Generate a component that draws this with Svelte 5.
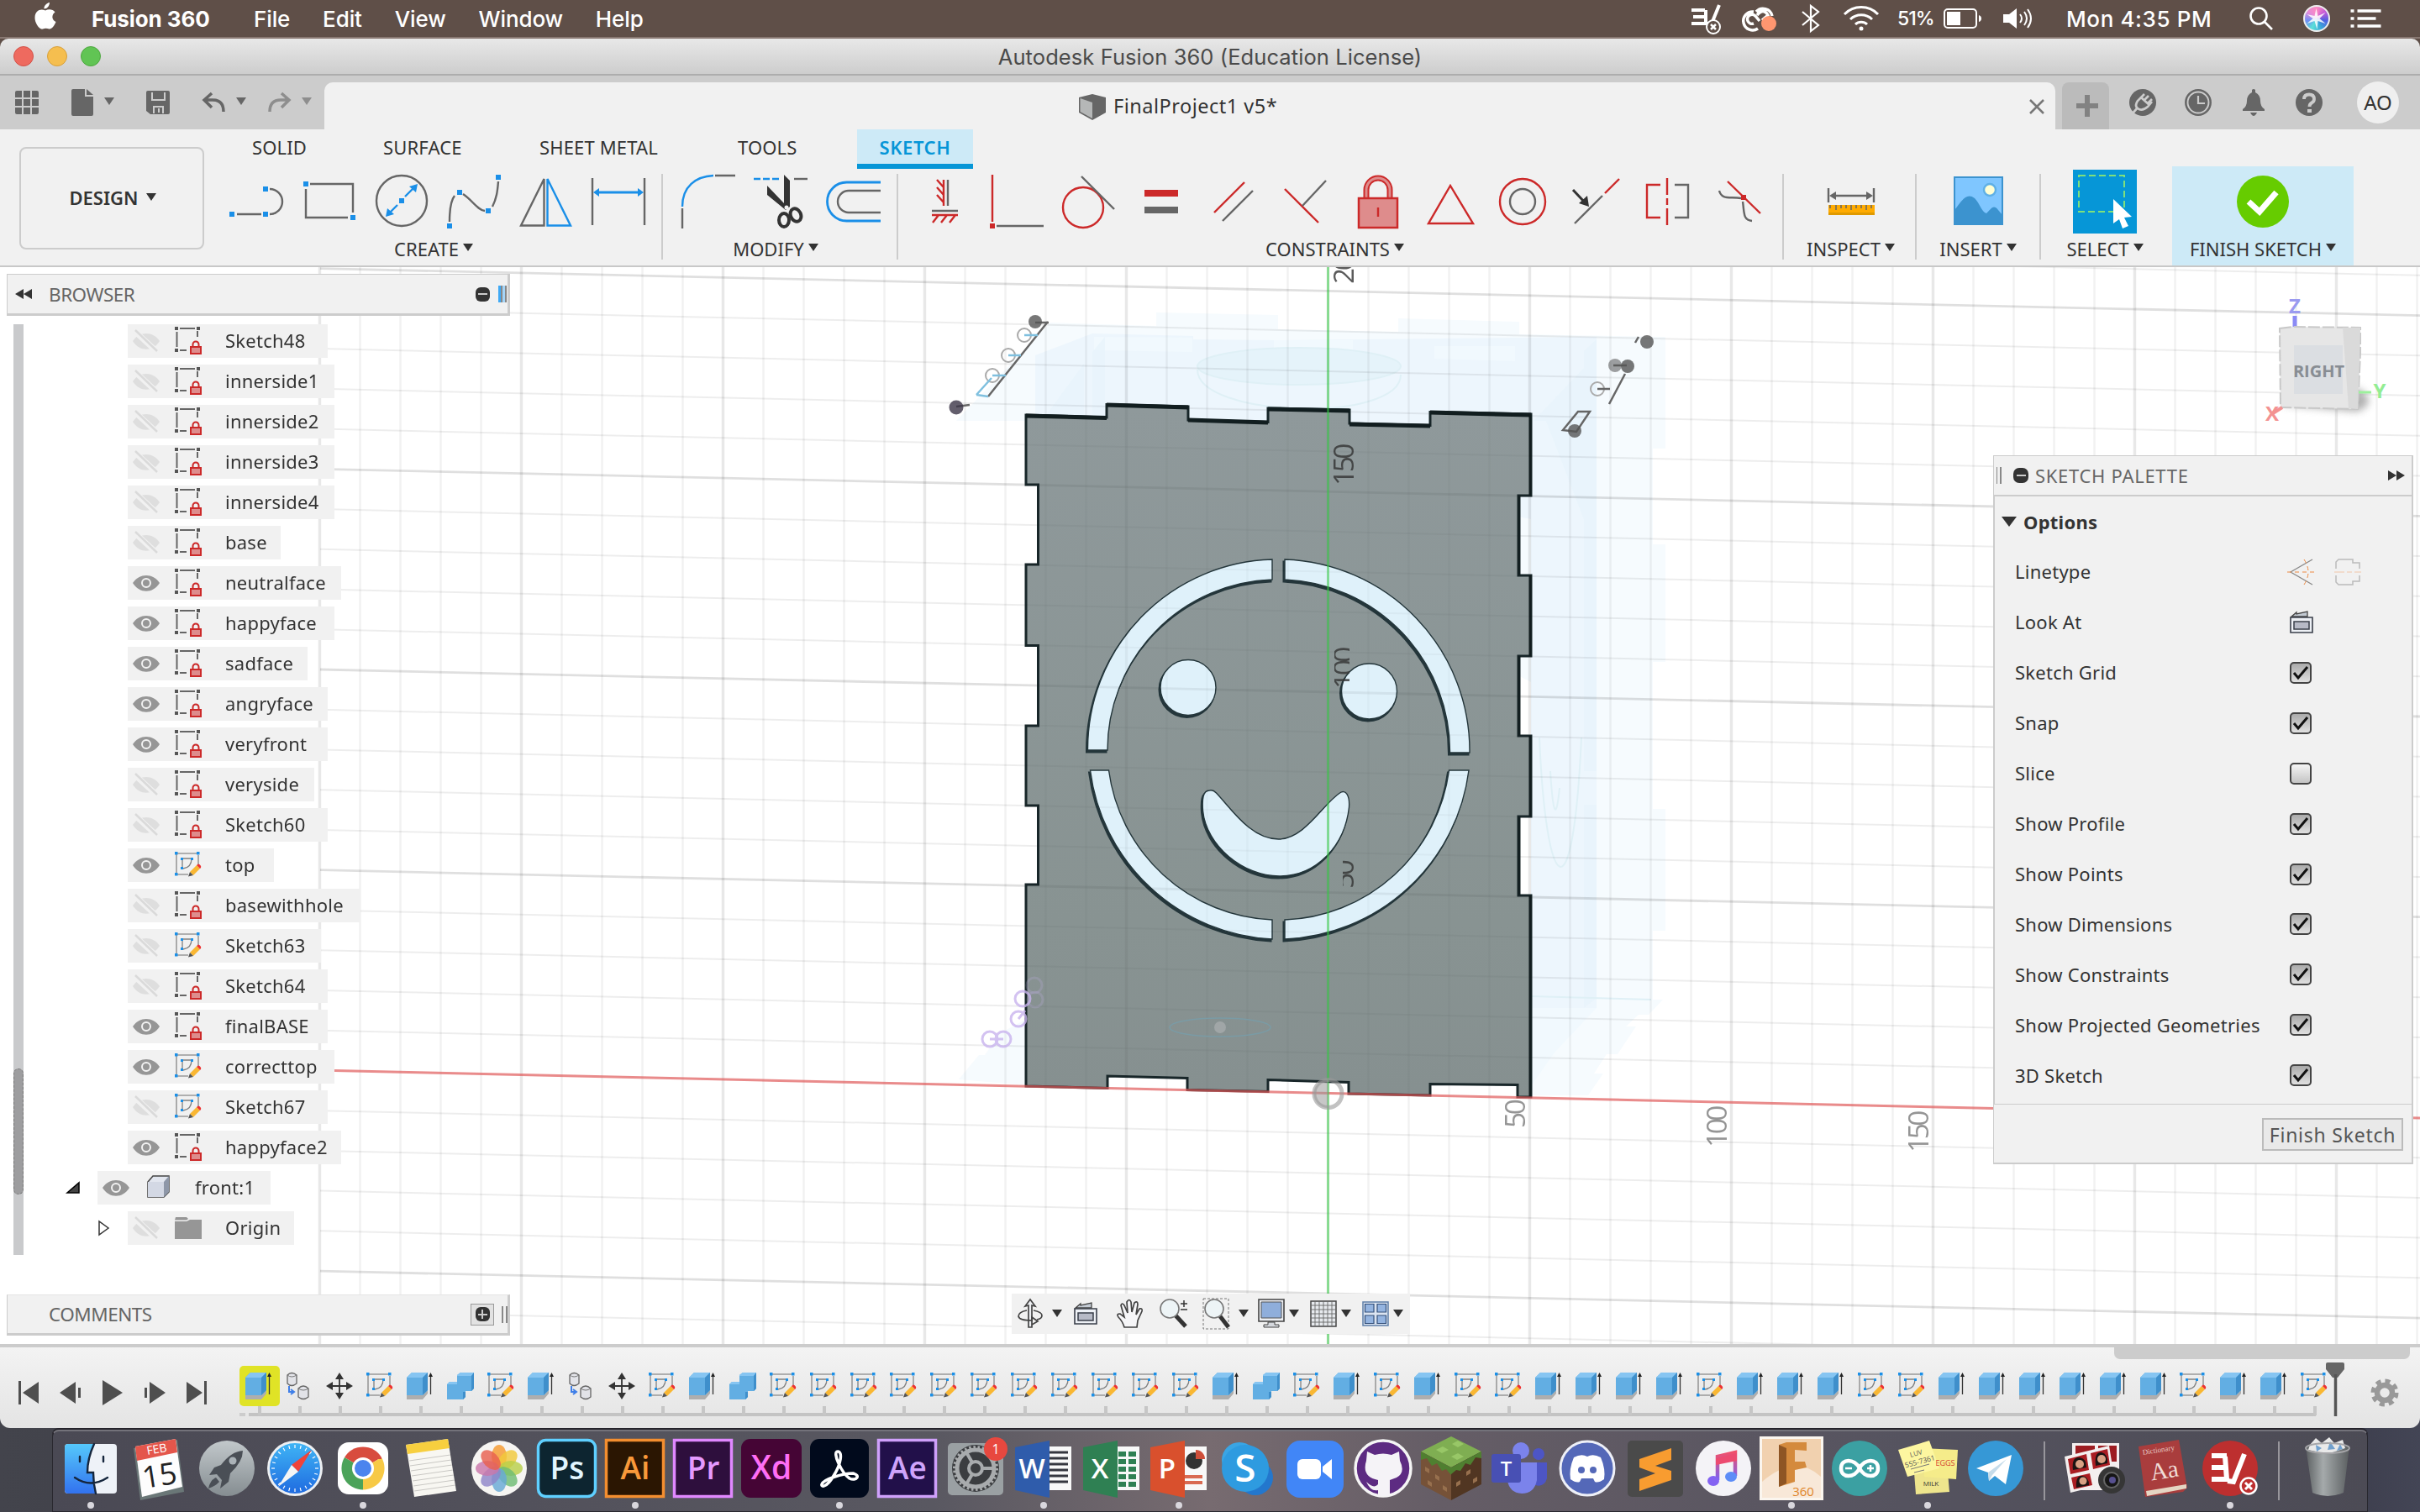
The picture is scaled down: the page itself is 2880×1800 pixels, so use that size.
<script>
  const menus = ['File', 'Edit', 'View', 'Window', 'Help'];
  const tabs = [['SOLID', 156], ['SURFACE', 186], ['SHEET METAL', 236], ['TOOLS', 142]];
  const createIcons = ['line', 'rect', 'circle', 'spline', 'mirror', 'dimension'];
  const modifyIcons = ['fillet', 'trim', 'offset'];
  const constraintIcons = ['hv', 'coincident', 'tangent', 'equal', 'parallel', 'perp', 'lock', 'midpoint', 'concentric', 'collinear', 'symmetry', 'curvature'];

  // name, visible, icon kind, row width
  const rows = [
    ['Sketch48', 0, 'locked', 238], ['innerside1', 0, 'locked', 246], ['innerside2', 0, 'locked', 246],
    ['innerside3', 0, 'locked', 246], ['innerside4', 0, 'locked', 246], ['base', 0, 'locked', 182],
    ['neutralface', 1, 'locked', 254], ['happyface', 1, 'locked', 246], ['sadface', 1, 'locked', 214],
    ['angryface', 1, 'locked', 238], ['veryfront', 1, 'locked', 238], ['veryside', 0, 'locked', 222],
    ['Sketch60', 0, 'locked', 238], ['top', 1, 'sketch', 174], ['basewithhole', 0, 'locked', 277],
    ['Sketch63', 0, 'sketch', 230], ['Sketch64', 0, 'locked', 238], ['finalBASE', 1, 'locked', 238],
    ['correcttop', 1, 'sketch', 246], ['Sketch67', 0, 'sketch', 238], ['happyface2', 1, 'locked', 254],
    ['front:1', 1, 'body', 206], ['Origin', 0, 'folder', 198]
  ];
  const options = [
    ['Sketch Grid', 1], ['Snap', 1], ['Slice', 0], ['Show Profile', 1], ['Show Points', 1],
    ['Show Dimensions', 1], ['Show Constraints', 1], ['Show Projected Geometries', 1], ['3D Sketch', 1]
  ];
  const features = 'EJMSECSEJMSECSSSSSSSSSSSECSESESSEEEESEEESSEEEEEESEES'.split('');
  const apps = [
    'finder', 'calendar', 'launchpad', 'safari', 'chrome', 'notes', 'photos', 'ps', 'ai', 'pr', 'xd', 'acrobat', 'ae',
    'settings', 'word', 'excel', 'powerpoint', 'skype', 'zoom', 'github', 'minecraft', 'teams', 'discord', 'sublime',
    'music', 'fusion', 'arduino', 'stickies', 'telegram', '|', 'photobooth', 'dictionary', 'v3', '|', 'trash'
  ];
  const running = ['finder', 'chrome', 'ai', 'acrobat', 'word', 'powerpoint', 'fusion', 'stickies', 'v3'];
  const adobe = {
    ps: ['Ps', '#0d2530', '#5fd0ff', '#e2f6ff', 9], ai: ['Ai', '#2b1602', '#f48e2f', '#f9993a', 0],
    pr: ['Pr', '#2e0f3d', '#e088ff', '#e59aff', 0], ae: ['Ae', '#22104a', '#cfa0fb', '#cfa4fb', 0]
  };
  const vlines = Array.from({ length: 53 }, (_, i) => ({ x: 380.5 + i * 48, major: i % 5 === 0 }));
  const hlines = Array.from({ length: 30 }, (_, k) => ({ y: 1.6 + (k - 1) * 47.74, major: (k - 1) % 5 === 0, axis: k === 21 })).filter((l) => !l.axis);
  const part = 'M1221 176L1317 179V163.5L1414 166V182L1509 184.5V168L1606 170V186L1702 188.5V172.5L1822 175V272H1807V367H1822V463H1807V558H1822V654H1807V748H1822V988H1806V973.5L1702 972.5V986L1605 984V970.5L1509 967.5V981.5L1413 979.5V965.5L1318 963V977.5L1221 975V735H1235.5V641H1221V546H1235.5V450.5H1221V354H1235.5V259H1221Z';
  const holes = [
    'M1513.5 349A226 226 0 0 0 1294 576H1317.5A203 203 0 0 1 1513.5 373Z',
    'M1528.500 349A228 228 0 0 1 1748.5 579H1725A205 205 0 0 0 1528.5 373Z',
    'M1297 600A230 230 0 0 0 1513.5 801V778A205 205 0 0 1 1319 600Z',
    'M1747.5 600A230 230 0 0 1 1528.5 801V778A205 205 0 0 0 1724 600Z',
    'M1380.500 501.500A33 33 0 0 1 1446.500 501.500A33 33 0 0 1 1380.500 501.500Z',
    'M1596 506A33 33 0 0 1 1662 506A33 33 0 0 1 1596 506Z',
    'M1439 624C1431 624 1430 634 1431 648C1435 690 1479 726 1522 726C1566 726 1600 690 1605 644C1606 630 1601 622 1594 627C1574 640 1552 682 1521 682C1488 682 1465 646 1447 627Q1443 623 1439 624Z'
  ];
  const spokes = Array.from({ length: 24 }, (_, i) => i * 15);
  const petals = ['#f59b2f', '#f0c93a', '#b8cf4b', '#6fbd74', '#68a9d6', '#8f86c9', '#c978ab', '#e8604f'];
</script>

{#snippet caret(c = '#333')}
  <svg class="caret" width="12" height="10" viewBox="0 0 12 10"><path d="M0 0H12L6 9Z" fill={c} /></svg>
{/snippet}

{#snippet grid()}
  {#each vlines as l}<path d="M{l.x} 0V1282" stroke-width={l.major ? 3.500 : 2.500} opacity={l.major ? 0.085 : 0.05} />{/each}
  {#each hlines as l}<path d="M381 {l.y}L2880 {l.y + 56}" stroke-width={l.major ? 2.800 : 2} opacity={l.major ? 0.12 : 0.065} />{/each}
{/snippet}

{#snippet tool(kind)}
  <svg class="tool" width="64" height="64" viewBox="0 0 64 64" fill="none" stroke="#666" stroke-width="2.400">
    {#if kind === 'line'}
      <path d="M8 47H37M47 17A15 15 0 0 1 47 47" />
      <path d="M-1 44h6v6h-6zM39 44h6v6h-6zM39 14h6v6h-6z" fill="#1a8fe8" stroke="none" />
    {:else if kind === 'rect'}
      <path d="M9 11H60V45M54 51H4V17" />
      <path d="M1 8h6v6h-6zM57 48h6v6h-6z" fill="#1a8fe8" stroke="none" />
    {:else if kind === 'circle'}
      <circle cx="32" cy="31" r="30" />
      <path d="M36 26L46 16M27 36L18 45" stroke="#1a8fe8" />
      <path d="M29 28h6v6h-6zM51 11L49 21L41 14ZM13 50L15 40L23 47Z" fill="#1a8fe8" stroke="none" />
    {:else if kind === 'spline'}
      <path d="M3 56C3 40 5 30 9 25M19 23C30 30 36 42 45 43M54 38C59 28 60 20 61 8" />
      <path d="M0 58h6v6h-6zM12 18h6v6h-6zM46 40h6v6h-6zM58 0h6v6h-6z" fill="#1a8fe8" stroke="none" />
    {:else if kind === 'mirror'}
      <path d="M29.500 5V60.500H2Z" /><path d="M33.500 5V60.500H61Z" stroke="#1a8fe8" />
    {:else if kind === 'dimension'}
      <path d="M1 4V60M63 4V60" /><path d="M8 21H56" stroke="#1a8fe8" stroke-width="3" />
      <path d="M2 21L9 16V26ZM62 21L55 16V26Z" fill="#1a8fe8" stroke="none" />
    {:else if kind === 'fillet'}
      <path d="M0 40V64M39 1H63" /><path d="M0 38C0 14 16 2 37 1" stroke="#1a8fe8" />
    {:else if kind === 'trim'}
      <path d="M-1 5H31" stroke="#1a8fe8" stroke-dasharray="8 3" /><path d="M47 5H63" />
      <path d="M35 0L42 7V38L37 42L15 24V13L35 34Z" fill="#333" stroke="none" />
      <ellipse cx="35" cy="54" rx="6" ry="8" stroke="#333" stroke-width="4" /><ellipse cx="49" cy="48" rx="6" ry="8" transform="rotate(-25 49 48)" stroke="#333" stroke-width="4" />
      <circle cx="38" cy="39" r="2.500" fill="#f1f1f1" stroke="none" />
    {:else if kind === 'offset'}
      <path d="M64 9H23.500A23 23 0 0 0 23.500 55H64" stroke="#1a8fe8" stroke-width="2.800" /><path d="M64 19H26A13 13 0 0 0 26 45H64" />
    {:else if kind === 'hv'}
      <path d="M36 6V37M17 43H48" /><path d="M31 6V37M17 48H48M23 6L31 15M23 15L31 24M23 24L31 33M25 48L18 57M35 48L28 57M45 48L38 57" stroke="#cc2929" />
    {:else if kind === 'coincident'}
      <path d="M3 0V56" stroke="#cc2929" /><path d="M0 58h6v6H0z" fill="#cc2929" stroke="none" /><path d="M8 61H64" />
    {:else if kind === 'tangent'}
      <circle cx="25" cy="39" r="24" stroke="#cc2929" /><path d="M23 2L62 41" />
    {:else if kind === 'equal'}
      <path d="M12 18H52V26H12Z" fill="#cc2929" stroke="none" /><path d="M12 38H52V46H12Z" fill="#666" stroke="none" />
    {:else if kind === 'parallel'}
      <path d="M9 45L45 9" stroke="#cc2929" /><path d="M19 55L55 19" />
    {:else if kind === 'perp'}
      <path d="M7 17L47 57" stroke="#cc2929" /><path d="M28 37L56 7" />
    {:else if kind === 'lock'}
      <path d="M18 28V18a14 14 0 0 1 28 0V28" stroke="#cc2929" stroke-width="7" /><path d="M18 28V18a14 14 0 0 1 28 0V28" stroke="#de8c8c" stroke-width="3" />
      <rect x="9" y="28" width="46" height="35" fill="#de8c8c" stroke="#cc2929" stroke-width="2.500" /><path d="M32 39V50" stroke="#cc2929" />
    {:else if kind === 'midpoint'}
      <path d="M32 13L6 58H59Z" stroke="#cc2929" />
    {:else if kind === 'concentric'}
      <circle cx="32" cy="32" r="27" stroke="#cc2929" /><circle cx="32" cy="32" r="15" />
    {:else if kind === 'collinear'}
      <path d="M8 58L41 25" /><path d="M44 22L61 5" stroke="#cc2929" /><path d="M6 18L20 33" stroke="#333" stroke-width="3" /><path d="M25 38L13 34L23 25Z" fill="#333" stroke="none" />
    {:else if kind === 'symmetry'}
      <path d="M24 12H8V51H24M32 4V24M32 28V36M32 40V60" stroke="#cc2929" /><path d="M41 12H57V51H41" />
    {:else if kind === 'curvature'}
      <path d="M8 19C11 30 20 26 34 28M36 32C38 45 36 54 47 55" /><path d="M18 8L57 46" stroke="#cc2929" /><path d="M34 24h6v6h-6z" fill="#cc2929" stroke="none" />
    {:else if kind === 'inspect'}
      <path d="M5 16V33M59 16V33M10 25H54" /><path d="M6 25L14 20V30ZM58 25L50 20V30Z" fill="#666" stroke="none" />
      <path d="M5 36H60V48H5Z" fill="#ffab00" stroke="none" /><path d="M5 46.500H60" stroke="#e09a00" stroke-width="3" />
      <path d="M7 36v4M14 36v6M20 36v4M26 36v4M32 36v6M38 36v4M44 36v4M50 36v6M56 36v4" stroke-width="1.500" />
    {:else if kind === 'insert'}
      <path d="M4 3H61V59H4Z" fill="#7fc6ff" stroke="#3c93cf" stroke-width="2" /><circle cx="46" cy="18" r="7" fill="#ffffd5" stroke="#5fb0e6" />
      <path d="M4 42C12 32 18 20 28 28C34 34 36 44 42 46C47 42 50 34 56 42L61 48V59H4Z" fill="#3c93cf" stroke="none" />
    {/if}
  </svg>
{/snippet}

{#snippet eye(on)}
  <svg class="eye" width="32" height="28" viewBox="0 0 32 28">
    {#if on}
      <path d="M0 14C8 2 24 2 32 14C24 27 8 27 0 14Z" fill="#969696" /><circle cx="16" cy="14" r="5" fill="none" stroke="#f2f2f2" stroke-width="2" />
    {:else}
      <path d="M0 14C8 2 24 2 32 14C24 27 8 27 0 14Z" fill="#dedede" /><path d="M3 3L29 27" stroke="#f1f1f1" stroke-width="7" /><path d="M3 1L29 26" stroke="#dadada" stroke-width="2.500" />
    {/if}
  </svg>
{/snippet}

{#snippet sketchIcon()}
  <svg class="node" width="32" height="32" viewBox="0 0 32 32" fill="none">
    <path d="M2 3V27M3 2H27M28 4V17M3 27H16" stroke="#999" stroke-width="1.600" /><path d="M9 9V20M9 8H20C20 15 17 19 10 20" stroke="#808080" stroke-width="1.300" />
    <path d="M0 0h3.500v3.500H0zM26 0h3.500v3.500h-3.500zM0 25h3.500v3.500H0zM7 7h3v3H7zM19 7h3v3h-3zM7 18h3v3H7z" fill="#1b90e8" />
    <path d="M18 24L26 16L30 20L22 28Z" fill="#f9b733" /><path d="M26 16L28 14.500Q32 16 31 19L30 20Z" fill="#ee3030" /><path d="M18 24L22 28L16 29.500Z" fill="#555" />
  </svg>
{/snippet}

{#snippet node(kind)}
  {#if kind === 'locked'}
    <svg class="node" width="32" height="34" viewBox="0 0 32 34" fill="none">
      <path d="M6 2H24M2.500 6V24M27 5V12M6 28H14" stroke="#666" stroke-width="2" /><path d="M0 0h4v4H0zM26 0h4v4h-4zM0 26h4v4H0z" fill="#555" />
      <path d="M21.500 24V21a3.500 3.500 0 0 1 7 0V24" stroke="#cc2929" stroke-width="2" /><path d="M19 24H31V32H19Z" fill="#de8c8c" stroke="#cc2929" stroke-width="2" />
    </svg>
  {:else if kind === 'sketch'}
    {@render sketchIcon()}
  {:else if kind === 'body'}
    <svg class="node" width="28" height="30" viewBox="0 0 28 30"><path d="M2 8L8 1H27V20L21 26H2Z" fill="#e2e6ef" stroke="#444" stroke-width="1.500" /><path d="M21 8L27 1V20L21 26Z" fill="#8e97a8" /><path d="M2 8H21V26H2Z" fill="#d3d8e4" /></svg>
  {:else}
    <svg class="node" width="32" height="26" viewBox="0 0 32 26"><path d="M0 4V26H32V3H18L14 5H0M1 0H14L16 2L14 3.500H0Z" fill="#969696" /></svg>
  {/if}
{/snippet}

{#snippet lookAt()}
  <svg width="30" height="30" viewBox="0 0 30 30"><path d="M3 8L9 3V5L22 2V8Z" fill="#c3cad3" stroke="#444" stroke-width="1.300" /><path d="M2 9H28V27H2Z" fill="#eef1f6" stroke="#3a3f4a" stroke-width="1.600" /><path d="M6 14H24V23H6Z" fill="#b7bac6" stroke="#3a3f4a" stroke-width="1.500" /></svg>
{/snippet}

{#snippet feature(kind)}
  {#if kind === 'E'}
    <svg width="32" height="34" viewBox="0 0 32 34"><path d="M0 28H19L25 22V26L19 33H0Z" fill="#aeaeae" /><path d="M0 7L6 1H25V22L19 28H0Z" fill="#62aee3" /><path d="M0 7L6 1H25L19 7Z" fill="#86c5f2" /><path d="M19 7L25 1V22L19 28Z" fill="#3f8fcb" /><path d="M28.500 6V27" stroke="#333" stroke-width="1.300" /><path d="M28.500 1L31 6H26Z" fill="#222" /></svg>
  {:else if kind === 'C'}
    <svg width="32" height="34" viewBox="0 0 32 34"><path d="M12 4L16 1H32V20L29 23H22V30L19 33H0V15L3 12H12Z" fill="#62aee3" /><path d="M12 4L16 1H32L29 5H12ZM0 15L3 12H12V15Z" fill="#86c5f2" /><path d="M29 5L32 1V20L29 23ZM19 24H22V30L19 33Z" fill="#3f8fcb" /></svg>
  {:else if kind === 'J'}
    <svg width="32" height="34" viewBox="0 0 32 34"><g fill="#e2e3e8" stroke="#666" stroke-width="1.300"><path d="M2 4Q7 -1 13 4V14Q7 19 2 14Z" /><path d="M15 20Q21 14 27 20V30Q21 35 15 30Z" /></g><path d="M2 4Q7 8 13 4M15 20Q21 24 27 20" fill="none" stroke="#777" /><path d="M4 17V24H9M6 21L10 24L6 27" fill="none" stroke="#3f7fe8" stroke-width="2" /></svg>
  {:else if kind === 'M'}
    <svg width="32" height="34" viewBox="0 0 32 34"><path d="M16 6V28M5 17H27" stroke="#333" stroke-width="1.800" /><path d="M16 1L21 9H11ZM16 33L21 25H11ZM0 17L8 12V22ZM32 17L24 12V22Z" fill="#333" /></svg>
  {:else}
    {@render sketchIcon()}
  {/if}
{/snippet}

{#snippet app(name)}
  <svg class="app" width="80" height="80" viewBox="0 0 80 80">
    {#if name === 'finder'}
      <rect x="9" y="11" width="62" height="59" rx="4" fill="#eef2f8" /><path d="M13 11H44C38 24 36 34 36 45H43C43 54 44 62 46 70H13Q9 70 9 66V15Q9 11 13 11Z" fill="url(#gFinder)" />
      <path d="M44 11C38 24 36 34 36 45H43C43 54 44 62 46 70M27 26V32M55 26V32M21 51Q40 64 60 51" fill="none" stroke="#15263d" stroke-width="2.400" stroke-linecap="round" />
    {:else if name === 'calendar'}
      <path d="M10 16L62 6L70 68L18 78Z" fill="#6a7777" /><path d="M12 14L60 5L68 62L20 74Z" fill="#fdfdfd" /><path d="M12 14L60 5L62 21L14 31Z" fill="#e4564b" />
      <text x="38" y="22" transform="rotate(-10 38 20)" class="c w" font-size="14">FEB</text><text x="41" y="61" transform="rotate(-9 41 50)" class="c" font-size="36" fill="#222">15</text>
    {:else if name === 'launchpad'}
      <circle cx="40" cy="40" r="33" fill="url(#gGrey)" /><path d="M59 19Q45 20 33 36L25 39L19 48L28 47L34 54L32 64L42 56L44 46Q59 32 59 19Z" fill="#4a4f56" /><circle cx="47" cy="31" r="4.500" fill="#aab2b7" /><path d="M27 51Q20 54 18 64Q27 61 31 56Z" fill="#4a4f56" />
    {:else if name === 'safari'}
      <circle cx="40" cy="40" r="33" fill="#eef0f2" /><circle cx="40" cy="40" r="30" fill="url(#gSafari)" />
      {#each spokes as a}<path d="M40 12V16" stroke="#fff" stroke-width="1.200" transform="rotate({a} 40 40)" />{/each}
      <path d="M60 18L44 44L36 36Z" fill="#f0433a" /><path d="M20 62L44 44L36 36Z" fill="#f5f5f5" />
    {:else if name === 'chrome'}
      <rect x="10" y="9" width="60" height="62" rx="13" fill="#fff" /><path d="M40 40L18 27A25.500 25.500 0 0 1 62 27Z" fill="#d84c3e" /><path d="M40 40L18 27A25.500 25.500 0 0 0 40 65.500Z" fill="#4ba35a" /><path d="M40 40L62 27A25.500 25.500 0 0 1 40 65.500Z" fill="#f7c945" /><path d="M40 28H62" stroke="#d84c3e" stroke-width="2" /><circle cx="40" cy="40" r="13" fill="#fff" /><circle cx="40" cy="40" r="10" fill="#4b84ee" />
    {:else if name === 'notes'}
      <path d="M10 12L60 5L70 67L20 74Z" fill="#f8f7f2" /><path d="M10 12L60 5L62 16L12 23Z" fill="#f7cf3f" /><path d="M14 31L63 24M15 37L64 30M16 43L65 36M17 49L66 42M18 55L67 48M19 61L68 54M20 67L69 60" stroke="#c9c8c4" stroke-width="1" />
    {:else if name === 'photos'}
      <circle cx="40" cy="40" r="33" fill="#f6f5f2" />
      {#each petals as p, i}<ellipse cx="40" cy="26" rx="9" ry="14" fill={p} opacity=".82" transform="rotate({i * 45} 40 40)" />{/each}
    {:else if adobe[name]}
      <rect x="5.500" y="6.500" width="68" height="67" rx={adobe[name][4]} fill={adobe[name][1]} stroke={adobe[name][2]} stroke-width="3.500" /><text x="40" y="53" class="c b" font-size="37" fill={adobe[name][3]}>{adobe[name][0]}</text>
    {:else if name === 'xd'}
      <rect x="4" y="5" width="72" height="70" rx="11" fill="#450535" /><text x="40" y="53" class="c b" font-size="39" fill="#ff6ef5">Xd</text>
    {:else if name === 'acrobat'}
      <rect x="5" y="5" width="70" height="70" rx="11" fill="#010a1c" /><path d="M38 20C44 20 42 35 33 49C24 64 18 62 19 59C21 53 44 46 56 46C66 48 60 56 52 52C42 45 31 20 38 20Z" fill="none" stroke="#fff" stroke-width="3.500" />
    {:else if name === 'settings'}
      <rect x="7" y="10" width="66" height="62" rx="5" fill="#9aa0a3" /><circle cx="40" cy="40" r="28" fill="#3b3d40" /><circle cx="40" cy="40" r="22" fill="none" stroke="#a8abad" stroke-width="5" /><circle cx="40" cy="40" r="25" fill="none" stroke="#a8abad" stroke-width="4" stroke-dasharray="2.500 2.700" /><circle cx="40" cy="40" r="8" fill="none" stroke="#a8abad" stroke-width="4" /><path d="M48 40H62M36 33L29 21M36 47L29 59" stroke="#a8abad" stroke-width="4" />
      <circle cx="64" cy="17" r="14" fill="#e8483f" /><text x="64" y="23" class="c w" font-size="16">1</text>
    {:else if name === 'word' || name === 'excel' || name === 'powerpoint'}
      {@const c = { word: ['#2f5cab', 'W'], excel: ['#2f8053', 'X'], powerpoint: ['#d9502d', 'P'] }[name]}
      <path d="M42 14H73V66H42Z" fill="#f8f8f8" />
      {#if name === 'powerpoint'}<circle cx="58" cy="31" r="10" fill="#333" /><path d="M60 29V18A11 11 0 0 1 71 29Z" fill="#cf4f3a" /><path d="M46 50H68M46 57H68" stroke="#d96a52" stroke-width="4" />
      {:else if name === 'excel'}<path d="M48 23H70M48 32H70M48 41H70M48 50H70M48 59H70" stroke={c[0]} stroke-width="6" stroke-dasharray="9 3" />
      {:else}<path d="M46 21H69M46 28H69M46 35H69M46 42H69M46 49H69M46 56H69" stroke="#35373f" stroke-width="3" />{/if}
      <path d="M6 15L47 7V75L6 66Z" fill={c[0]} /><text x="26" y="52" class="c b w" font-size="33">{c[1]}</text>
    {:else if name === 'skype'}
      <circle cx="31" cy="30" r="21" fill="#3aa5e4" /><circle cx="50" cy="51" r="21" fill="#2377cd" /><circle cx="38" cy="40" r="28" fill="#2e9be0" /><text x="38" y="56" class="c b w" font-size="46">S</text>
    {:else if name === 'zoom'}
      <rect x="6" y="7" width="68" height="68" rx="16" fill="#4186f7" /><rect x="19" y="29" width="28" height="24" rx="6" fill="#fff" /><path d="M49 38L60 29V53L49 44Z" fill="#fff" />
    {:else if name === 'github'}
      <circle cx="40" cy="40" r="33" fill="#5d2b82" stroke="#f5f5f5" stroke-width="3.500" /><path d="M21 20L30 24Q40 21 50 24L59 20L60 31Q67 45 56 51L48 54V73H34V66Q25 68 20 56Q29 65 34 59V54Q14 50 20 31Z" fill="#f5f3f7" />
    {:else if name === 'minecraft'}
      <path d="M40 2L76 20L40 39L4 20Z" fill="#7fae52" /><path d="M4 20L40 39V78L4 59Z" fill="#765238" /><path d="M76 20L40 39V78L76 59Z" fill="#513622" /><path d="M4 20L40 39V48L34 41L29 43L23 34L17 37L11 28L4 30ZM76 20L40 39V47L46 42L51 43L57 34L63 36L69 27L76 28Z" fill="#4f7f30" /><path d="M9 38l5 3v5l-5-3zM21 47l5 3v5l-5-3zM12 54l5 3v5l-5-3zM30 60l5 3v5l-5-3zM46 57l5-3v5l-5 3zM58 44l5-3v5l-5 3zM66 53l5-3v5l-5 3z" fill="#97704e" /><path d="M22 18l8-4 7 4-8 4zM40 26l8-4 7 4-8 4zM41 11l7-4 7 4-7 4z" fill="#98c767" />
    {:else if name === 'teams'}
      <circle cx="63" cy="23" r="7" fill="#4d55c5" /><circle cx="42" cy="19" r="10" fill="#7b83eb" /><path d="M54 33H73V52Q70 63 59 60Z" fill="#4d55c5" /><path d="M26 33H61V54Q58 70 43 70Q28 69 26 54Z" fill="#7b83eb" /><rect x="7" y="23" width="35" height="34" rx="3" fill="#4850b4" /><text x="24.500" y="49" class="c b w" font-size="24">T</text>
    {:else if name === 'discord'}
      <circle cx="40" cy="40" r="32" fill="#5468b8" stroke="#eef0f8" stroke-width="3" /><path d="M24 27Q33 22 40 26Q47 22 56 27Q62 41 60 53Q53 58 49 56L47 52H33L31 56Q27 58 20 53Q18 41 24 27Z" fill="#fff" /><circle cx="33" cy="42" r="4" fill="#5468b8" /><circle cx="47" cy="42" r="4" fill="#5468b8" />
    {:else if name === 'sublime'}
      <rect x="7" y="7" width="66" height="67" rx="5" fill="#4a4a4a" /><path d="M21 29L59 16V30L40 37L59 43V54L21 67V53L40 46L21 39Z" fill="#f89c30" />
    {:else if name === 'music'}
      <circle cx="40" cy="40" r="33" fill="#f4f3f7" /><path d="M33 54V26L54 21V49" fill="none" stroke="url(#gMusic)" stroke-width="4.500" /><path d="M31 28L56 22V31L31 36Z" fill="#ec4b70" /><ellipse cx="28" cy="55" rx="7" ry="6" fill="#8463f2" /><ellipse cx="49" cy="50" rx="7" ry="6" fill="#5d8df7" />
    {:else if name === 'fusion'}
      <rect x="2" y="2" width="76" height="76" fill="#fbf6ef" /><rect x="5" y="5" width="70" height="70" fill="#f1d1af" /><path d="M5 56Q45 22 75 50V75H5Z" fill="#f8e8d8" /><path d="M25 12L34 9H58V19L44 18V32H56L58 39L44 42V56L25 62Z" fill="#d48a3d" /><path d="M25 12L34 16V58L25 62Z" fill="#8e5524" /><text x="54" y="73" class="c" font-size="15" fill="#e08428">360</text>
    {:else if name === 'arduino'}
      <circle cx="40" cy="40" r="33" fill="#3ba0a2" /><path d="M40 40C34 28 18 28 18 40S34 52 40 40C46 28 62 28 62 40S46 52 40 40Z" fill="none" stroke="#fff" stroke-width="4.500" /><path d="M23 40H31M49 40H57M53 36V44" stroke="#fff" stroke-width="2.500" />
    {:else if name === 'stickies'}
      <path d="M24 45H64L66 68L26 71Z" fill="#eee58d" /><path d="M33 16L76 18L74 53L36 50Z" fill="#f5ec8a" /><path d="M5 18L42 7L54 40L16 50Z" fill="#fdf6a0" /><text x="27" y="25" class="c" font-size="8" fill="#555" transform="rotate(-15 27 25)">LUV</text><text x="31" y="35" class="c" font-size="8.500" fill="#555" transform="rotate(-15 30 33)">555-7361</text><path d="M20 41L42 35M24 45L36 42" stroke="#777" stroke-width="1" /><text x="61" y="37" class="c" font-size="9" fill="#d64532">EGGS</text><text x="44" y="61" class="c" font-size="8" fill="#333">MILK</text>
    {:else if name === 'telegram'}
      <circle cx="40" cy="40" r="33" fill="#3698d6" /><path d="M17 40L59 24L52 59L39 49L32 55L31 45Z" fill="#fff" /><path d="M31 45L53 29L36 48L32 55Z" fill="#c6dcea" />
    {:else if name === 'photobooth'}
      <path d="M14 10H70V66H14Z" fill="#f3efef" /><path d="M18 13H41V32H18ZM45 13H67V32H45ZM18 37H41V62H18Z" fill="#9d1c21" /><path d="M5 26L58 13L65 56L12 69Z" fill="#f3efef" /><path d="M9 29L31 23L34 42L12 47ZM36 22L56 17L59 36L39 41ZM13 51L35 46L38 60L16 65Z" fill="#a91d22" /><path d="M15 42Q13 26 23 27Q31 28 31 39ZM42 37Q40 20 49 21Q57 23 56 34ZM19 63Q18 48 26 49Q34 50 34 60Z" fill="#1c1413" /><circle cx="23" cy="35" r="5" fill="#d9a184" /><circle cx="49" cy="29" r="5" fill="#d9a184" /><circle cx="27" cy="55" r="4.500" fill="#d9a184" /><circle cx="61" cy="54" r="16" fill="#363636" /><circle cx="61" cy="54" r="9" fill="#161616" stroke="#666" stroke-width="2" /><circle cx="62" cy="54" r="4" fill="#57508f" />
    {:else if name === 'dictionary'}
      <path d="M12 14L60 6L70 63L65 68L20 74Z" fill="#a93d3d" /><path d="M21 67L69 59V64L22 73Z" fill="#e5d6c3" /><text x="36" y="21" class="c s" font-size="9" fill="#e5c7c2" transform="rotate(-9 36 20)">Dictionary</text><text x="43" y="52" class="c s" font-size="29" fill="#f0dcd6" transform="rotate(-9 43 45)">Aa</text>
    {:else if name === 'v3'}
      <circle cx="40" cy="40" r="33" fill="#bd2f2f" /><path d="M18 25H36M18 39H35M18 53H36L34 26M37 55L44 56L57 23" fill="none" stroke="#fff" stroke-width="6" /><circle cx="62" cy="61" r="9.500" fill="#bd2f2f" stroke="#fff" stroke-width="2.500" /><path d="M58 57L66 65M66 57L58 65" stroke="#fff" stroke-width="3" />
    {:else if name === 'trash'}
      <path d="M14 14H66L59 69Q40 77 22 69Z" fill="url(#gTrash)" /><path d="M19 12L26 4L33 10L42 3L48 10L58 6L61 16L40 23L17 18Z" fill="#e9e9e9" /><path d="M26 12L33 16L27 20ZM43 8L49 17L40 18ZM55 11L58 17L51 19Z" fill="#71a0cd" /><ellipse cx="40" cy="16" rx="26" ry="6" fill="none" stroke="#a5a5a8" stroke-width="2" />
    {/if}
  </svg>
{/snippet}

<svg class="defs" width="0" height="0"><defs>
  <linearGradient id="gFinder" x2="0" y2="1"><stop stop-color="#55c8fb" /><stop offset="1" stop-color="#3272ef" /></linearGradient>
  <linearGradient id="gGrey" x2="0" y2="1"><stop stop-color="#c2c8cb" /><stop offset="1" stop-color="#858d91" /></linearGradient>
  <linearGradient id="gSafari" x2="0" y2="1"><stop stop-color="#3fb4f5" /><stop offset="1" stop-color="#1f6be0" /></linearGradient>
  <linearGradient id="gMusic" x2="0" y2="1"><stop stop-color="#f0506c" /><stop offset="1" stop-color="#7b63f2" /></linearGradient>
  <linearGradient id="gTrash"><stop stop-color="#5c6062" /><stop offset=".4" stop-color="#a5aaab" /><stop offset="1" stop-color="#5a5e60" /></linearGradient>
  <linearGradient id="gPart" x2="0" y2="1"><stop stop-color="#8f999b" /><stop offset=".75" stop-color="#889392" /><stop offset="1" stop-color="#869090" /></linearGradient>
  <clipPath id="partClip"><path d={part} /></clipPath>
</defs></svg>

<div class="screen">
  <header class="menubar">
    <svg class="apple" width="26" height="32" viewBox="0 0 26 32" fill="#fff"><path d="M18 0C18 4 15 7.500 11.500 7.500C11 4 14.500 .5 18 0ZM24.500 11.500C20 14.500 20.500 21 25.500 23C23.500 28 20.500 32 17.500 31.500C15 30.800 12.500 30.500 10 31.500C6 33 0 24 .5 17.500C1 9 7.500 7 13 9.500C17 7.500 22 8 24.500 11.500Z" /></svg>
    <b>Fusion 360</b>
    {#each menus as m}<span class="menu">{m}</span>{/each}
    <div class="status">
      <svg width="38" height="38" viewBox="0 0 38 38" fill="none" stroke="#fff" stroke-width="4"><path d="M1 9H17M3 17H17M1 25H18V9M19 25H25L34 3" /><circle cx="27" cy="29" r="8" fill="#5f4f48" stroke-width="2" /><path d="M24 26L30 32M30 26L24 32" stroke-width="2.500" /></svg>
      <svg width="42" height="34" viewBox="0 0 42 34" fill="none" stroke="#fff" stroke-width="3.500"><path d="M17 9A11 11 0 0 1 36 14M14 9A11 11 0 1 0 19 29M21 20L16 14A5.500 5.500 0 1 0 14 23M18 13Q26 4 31 13L24 19" /><circle cx="32" cy="23" r="9" fill="#ff9670" stroke="none" /></svg>
      <svg width="22" height="34" viewBox="0 0 22 34" fill="none" stroke="#fff" stroke-width="2.200"><path d="M1 9L20 25L11 32V2L20 9L1 25" /></svg>
      <svg width="42" height="30" viewBox="0 0 42 30" fill="none" stroke="#fff" stroke-width="3"><path d="M1 10A28 28 0 0 1 41 10M8 16A19 19 0 0 1 34 16M14 22A10 10 0 0 1 28 22" /><circle cx="21" cy="27" r="2.500" fill="#fff" stroke="none" /></svg>
      <span class="pct">51%</span>
      <svg width="46" height="24" viewBox="0 0 46 24"><rect x="1" y="1" width="38" height="22" rx="4" fill="none" stroke="#fff" stroke-width="2" /><rect x="4" y="4" width="16" height="16" fill="#fff" /><path d="M42 8Q45 9 45 12T42 16Z" fill="#fff" /></svg>
      <svg width="34" height="26" viewBox="0 0 34 26"><path d="M0 8H7L16 1V25L7 18H0Z" fill="#fff" /><path d="M20 8Q24 13 20 18M25 5Q31 13 25 21M29 2Q37 13 29 24" fill="none" stroke="#fff" stroke-width="2" /></svg>
      <span class="clock">Mon 4:35 PM</span>
      <svg width="28" height="28" viewBox="0 0 28 28" fill="none" stroke="#fff" stroke-width="2.600"><circle cx="11" cy="11" r="9.500" /><path d="M18 18L27 27" /></svg>
      <i class="siri"><svg width="32" height="32" viewBox="0 0 32 32"><path d="M16 4L18 13L27 9L20 16L27 22L18 19L17 29L14 19L5 22L12 16L5 11L14 13Z" fill="#fff" opacity=".85" /></svg></i>
      <svg width="36" height="22" viewBox="0 0 36 22" stroke="#fff" stroke-width="3.500"><path d="M0 2H4M8 2H36M0 11H4M8 11H30M0 20H4M8 20H36" /></svg>
    </div>
  </header>

  <div class="titlebar"><i class="red"></i><i class="amber"></i><i class="green"></i><span>Autodesk Fusion 360 (Education License)</span></div>

  <div class="docbar">
    <div class="quick">
      <svg width="28" height="28" viewBox="0 0 28 28" fill="#666"><path d="M0 2q0-2 2-2h6v8H0zM10 0h8v8h-8zM20 0h6q2 0 2 2v6h-8zM0 10h8v8H0zM10 10h8v8h-8zM20 10h8v8h-8zM0 20h8v8H2q-2 0-2-2zM10 20h8v8h-8zM20 20h8v6q0 2-2 2h-6z" /></svg>
      <svg class="file" width="26" height="32" viewBox="0 0 26 32" fill="#666"><path d="M0 2Q0 0 2 0H16V9H26V30Q26 32 24 32H2Q0 32 0 30ZM18 0L26 7H18Z" /></svg>
      {@render caret('#666')}
      <svg class="save" width="28" height="28" viewBox="0 0 28 28"><path d="M0 2Q0 0 2 0H26Q28 0 28 2V26Q28 28 26 28H5L0 24Z" fill="#666" /><path d="M7 2V11H22V2M9 27V19H20V27M15 21V26" fill="none" stroke="#ccc" stroke-width="2" /></svg>
      <svg class="undo" width="27" height="24" viewBox="0 0 27 24" fill="none" stroke="#666" stroke-width="3.500"><path d="M11 1L2 9L11 18M3 9H12Q25 9 25 23" /></svg>
      {@render caret('#666')}
      <svg class="redo" width="27" height="24" viewBox="0 0 27 24" fill="none" stroke="#8e8e8e" stroke-width="3.500"><path d="M16 1L25 9L16 18M24 9H15Q2 9 2 23" /></svg>
      {@render caret('#8e8e8e')}
    </div>
    <div class="doctab">
      <svg width="32" height="32" viewBox="0 0 32 32"><path d="M0 4L16 0L32 4V22L16 31L0 22Z" fill="#666" /><path d="M1.500 5L16 10V29L1.500 21Z" fill="#b5b7b7" /></svg>
      <span>FinalProject1 v5*</span>
      <svg class="close" width="18" height="18" viewBox="0 0 18 18"><path d="M1 1L17 17M17 1L1 17" stroke="#777" stroke-width="2.500" /></svg>
    </div>
    <div class="plus"><svg width="26" height="26" viewBox="0 0 26 26"><path d="M13 0V26M0 13H26" stroke="#828282" stroke-width="6" /></svg></div>
    <div class="right">
      <svg width="32" height="32" viewBox="0 0 32 32"><circle cx="16" cy="16" r="16" fill="#666" /><path d="M18 6L10 14Q6 20 10 23Q15 27 22 21L27 15M14 10L24 19M18 13L23 8M22 17L27 12M10 22L4 29" fill="none" stroke="#ccc" stroke-width="2.700" /></svg>
      <svg width="32" height="32" viewBox="0 0 32 32"><circle cx="16" cy="16" r="14.700" fill="none" stroke="#666" stroke-width="2.500" /><circle cx="16" cy="16" r="11.500" fill="#666" /><path d="M16 8V17H24" fill="none" stroke="#ccc" stroke-width="2.200" /></svg>
      <svg width="32" height="32" viewBox="0 0 32 32" fill="#666"><path d="M14 4V1Q16-1 18 1V4Q24 7 24 14Q24 21 29 24V26H3V24Q8 21 8 14Q8 7 14 4ZM12 28H20Q18 32 16 32T12 28Z" /></svg>
      <svg width="32" height="32" viewBox="0 0 32 32"><circle cx="16" cy="16" r="16" fill="#666" /><path d="M10 12Q10 6.500 16 6.500T22 12Q22 15 19 16.500Q16.500 18 16.500 21" fill="none" stroke="#ccc" stroke-width="3.800" /><rect x="14" y="24" width="5" height="4" fill="#ccc" /></svg>
      <span class="avatar">AO</span>
    </div>
  </div>

  <section class="ribbon">
    <div class="design">DESIGN {@render caret()}</div>
    <div class="ribmain">
      <div class="tabs">
        {#each tabs as t}<span class="tab" style:width="{t[1]}px">{t[0]}</span>{/each}
        <span class="tab on">SKETCH</span>
      </div>
      <div class="groups">
        <div class="group create"><div class="icons">{#each createIcons as k}{@render tool(k)}{/each}</div><span class="gl">CREATE{@render caret()}</span></div>
        <i class="sep"></i>
        <div class="group modify"><div class="icons">{#each modifyIcons as k}{@render tool(k)}{/each}</div><span class="gl">MODIFY{@render caret()}</span></div>
        <i class="sep"></i>
        <div class="group cons"><div class="icons">{#each constraintIcons as k}{@render tool(k)}{/each}</div><span class="gl">CONSTRAINTS{@render caret()}</span></div>
        <i class="sep"></i>
        <div class="group inspect"><div class="icons">{@render tool('inspect')}</div><span class="gl">INSPECT{@render caret()}</span></div>
        <i class="sep"></i>
        <div class="group insert"><div class="icons">{@render tool('insert')}</div><span class="gl">INSERT{@render caret()}</span></div>
        <i class="sep"></i>
        <div class="group select"><div class="icons">
          <svg width="76" height="76" viewBox="0 0 76 76"><rect width="76" height="76" fill="#0696d7" /><path d="M7 7H61V50H7Z" fill="none" stroke="#7fe07c" stroke-width="2" stroke-dasharray="8 4" /><path d="M48 35L70 56L61 57L66 67L59 70L55 59L48 64Z" fill="#fff" /></svg>
        </div><span class="gl">SELECT{@render caret()}</span></div>
        <div class="group finish"><div class="icons">
          <svg width="64" height="64" viewBox="0 0 64 64"><circle cx="32" cy="32" r="31" fill="#6c0" /><path d="M15 32L28 44L48 21" fill="none" stroke="#fff" stroke-width="7" /></svg>
        </div><span class="gl">FINISH SKETCH{@render caret()}</span></div>
      </div>
    </div>
  </section>

  <main class="viewport">
    <svg class="canvas" width="2880" height="1282" viewBox="0 0 2880 1282">
      <path fill="#f6fbfe" d="M1138 183L1250 66L1376 70V54L1521 57V74L1664 77V61L1808 65V80L1982 83V216H1967V330H1982V470H1967V645H1982V790H1967V872H1979L1962 890H1950L1935 904H1947L1925 937H1912L1897 960H1908L1890 986H1822V494L1221 183Z" />
      <path fill="#edf6fd" d="M1232 183V105L1300 79L1420 82V86L1520 87L1900 83V882H1822V300L1221 183Z" />
      <path fill="#f1f9fe" d="M1302 83L1419 84V101L1302 99ZM1516 87H1610V103L1516 101ZM1707 94H1803V112L1707 109ZM1822 882H1900L1850 935L1822 975Z" />
      <path fill="#e7f4fb" opacity=".7" d="M1300 101L1315 83V183H1300ZM1240 183L1290 115V183ZM1885 100L1900 86V600H1885ZM1825 183L1885 120V300L1840 183ZM1885 640H1900V870L1885 882Z" />
      <g fill="none" stroke="#dff0f6" stroke-width="2"><ellipse cx="1546" cy="118" rx="121" ry="22" fill="#e5f3fa" /><path d="M1425 122C1425 180 1667 186 1667 128M1832 560C1840 750 1872 780 1882 560M1845 600Q1850 680 1856 620M1822 868L1965 872" /></g>
      <path d="M1141 967L1165 938H1172L1190 912L1222 895V974Z" fill="#f6fbfe" />
      <g stroke="#000">{@render grid()}</g>
      <path fill="url(#gPart)" stroke="#182629" stroke-width="3" d={part} />
      <path fill="none" stroke="#121e20" stroke-width="5" d="M1221 177L1317 179.500M1317 164L1414 167M1414 182L1509 185M1509 169L1606 171M1606 187L1702 189M1702 173L1822 176" />
      <path fill="none" stroke="#121e20" stroke-width="3" d="M1821 176V272M1808 272V367M1821 367V463M1808 463V558M1821 558V654M1808 654V748M1821 748V988" />
      <g fill="#24363b" stroke="#24363b" stroke-width="2" transform="translate(-1 1.500)">{#each holes as h}<path d={h} />{/each}</g>
      <g fill="#dff1fa" stroke="#24363b" stroke-width="1.400" transform="translate(.5 -1)">{#each holes as h}<path d={h} />{/each}</g>
      <g clip-path="url(#partClip)" opacity=".5" stroke="#000">{@render grid()}</g>
      <path d="M398 956.500L2880 1013" stroke="#e05a5a" stroke-width="3" opacity=".7" /><path d="M1580.500 0V1282" stroke="#35d045" stroke-width="2.500" opacity=".62" />
      <circle cx="1580.500" cy="984" r="16.500" fill="none" stroke="#999" stroke-width="5" opacity=".6" /><path d="M1580.500 967A17 17 0 0 0 1580.500 1001Z" fill="#999" opacity=".55" />
      <g class="nums" fill="#333" opacity=".8">
        <text transform="translate(1611 260) rotate(-90)">150</text><text transform="translate(1611 20) rotate(-90)">20</text>
        <svg class="clip" x="1588" y="440" width="18" height="62"><text transform="translate(23 62) rotate(-90)">100</text></svg>
        <svg class="clip" x="1598" y="700" width="30" height="42"><text transform="translate(13 40) rotate(-90)">50</text></svg>
        <text transform="translate(1815 1025) rotate(-90)" opacity=".65">50</text><text transform="translate(2055 1048) rotate(-90)" opacity=".65">100</text><text transform="translate(2295 1054) rotate(-90)" opacity=".65">150</text>
      </g>
      <g fill="none" stroke="#666" stroke-width="2.500">
        <path d="M1247 65L1176 154M1915 163L1934 127M1860 194L1878 172L1892 172L1876 196Z" />
        <g stroke="#aaa" stroke-width="2"><circle cx="1219" cy="81" r="8" /><circle cx="1200" cy="105" r="8" /><circle cx="1181" cy="129" r="8" /><circle cx="1901" cy="145" r="8" /></g>
        <path d="M1162 152L1180 132M1162 152L1176 154M1219 81H1235M1200 105H1215M1181 129H1197" stroke="#7fc0df" />
        <path d="M1901 145H1916M1920 117H1936M1946 90L1950 83M1138 166L1154 164M1232 66H1248" />
      </g>
      <g fill="#555" opacity=".8"><circle cx="1232" cy="65" r="8" /><circle cx="1138" cy="167" r="8.500" fill="#3d3648" /><circle cx="1922" cy="117" r="8" opacity=".7" /><circle cx="1937" cy="118" r="8" /><circle cx="1960" cy="89" r="8" /><circle cx="1874" cy="195" r="8" /></g>
      <g fill="none" stroke="#c9b3ee" stroke-width="3" opacity=".8"><circle cx="1178" cy="919" r="9" /><circle cx="1194" cy="919" r="9" /><circle cx="1212" cy="895" r="9" /><circle cx="1217" cy="871" r="9" /><circle cx="1231" cy="855" r="9" opacity=".25" /><circle cx="1232" cy="872" r="9" opacity=".25" /><path d="M1178 919H1194M1212 895L1220 885" /></g>
      <ellipse cx="1452" cy="905" rx="60" ry="11" fill="none" stroke="#7a9ba5" stroke-width="1.500" /><circle cx="1452" cy="905" r="7" fill="#a0a6a7" />
    </svg>

    <div class="bhead"><svg width="20" height="12" viewBox="0 0 20 12"><path d="M0 6L10 0V12ZM10 6L20 0V12Z" fill="#333" /></svg><span>BROWSER</span><i class="minus"></i><i class="grip blue"></i></div>
    <div class="scroll"><i></i></div>
    <div class="tree">
      {#each rows as r}
        <div class="line" class:up={r[2] === 'body'}>
          <span class="tw">
            {#if r[2] === 'body'}<svg width="16" height="14" viewBox="0 0 16 14"><path d="M1 13H15V1Z" fill="#444" stroke="#000" stroke-width="1.500" /></svg>
            {:else if r[2] === 'folder'}<svg width="13" height="18" viewBox="0 0 13 18"><path d="M1 1V17L12 9Z" fill="#fff" stroke="#333" stroke-width="1.500" /></svg>{/if}
          </span>
          <div class="row" style:width="{r[3]}px"><span class="e">{@render eye(r[1])}</span><span class="n">{@render node(r[2])}</span><span class="name">{r[0]}</span></div>
        </div>
      {/each}
    </div>
    <div class="bhead comments"><span>COMMENTS</span><b><i class="minus cross"></i></b><i class="grip"></i></div>

    <div class="navbar">
      <svg class="n1" width="30" height="36" viewBox="0 0 30 36" fill="none" stroke="#444" stroke-width="1.700"><path d="M13 34V8L9 9L15 1L21 9L17 8V34Z" fill="#eef0f3" /><path d="M11 14Q1 16 1 21Q2 26 17 26L17 22L24 27L17 31M19 14Q29 16 29 20T23 25" /></svg>{@render caret()}
      <span class="n2">{@render lookAt()}</span>
      <svg class="n3" width="32" height="36" viewBox="0 0 32 36"><path d="M10 34Q8 27 3 22Q0 18 5 18L10 22L6 8Q7 4 10 8L14 17L13 4Q16-1 18 4L19 16L22 5Q26 2 26 7L24 19L28 12Q32 11 31 15L26 26L25 34Z" fill="#f6f6f8" stroke="#444" stroke-width="1.700" /></svg>
      <svg class="n4" width="34" height="36" viewBox="0 0 34 36"><path d="M19 20L31 33" stroke="#333" stroke-width="5" /><circle cx="12" cy="12" r="11" fill="#edf4f6" stroke="#777" stroke-width="1.600" /><path d="M25 6H33M29 2V10M25 13H33" stroke="#333" stroke-width="1.500" /></svg>
      <svg class="n5" width="32" height="38" viewBox="0 0 32 38"><path d="M1 1H31V37H1Z" fill="none" stroke="#777" stroke-dasharray="3 2" /><path d="M21 22L31 35" stroke="#333" stroke-width="5" /><circle cx="14" cy="13" r="11" fill="#edf4f6" stroke="#777" stroke-width="1.600" /></svg>{@render caret()}
      <svg class="n6" width="32" height="36" viewBox="0 0 32 36"><path d="M1 1H31V27H1Z" fill="#eceef2" stroke="#444" stroke-width="1.600" /><path d="M4 4H28V23H4Z" fill="#8faedb" stroke="#555" /><path d="M12 28H20V31H25V34H7V31H12Z" fill="#d5d8dd" stroke="#444" /></svg>{@render caret()}
      <svg class="n7" width="32" height="36" viewBox="0 0 32 36"><path d="M1 3H31V33H1Z" fill="#e6e9ed" stroke="#444" stroke-width="1.500" /><path d="M6 3V33M11 3V33M16 3V33M21 3V33M26 3V33M1 8H31M1 13H31M1 18H31M1 23H31M1 28H31" stroke="#666" stroke-width=".9" /></svg>{@render caret()}
      <svg class="n8" width="32" height="30" viewBox="0 0 32 30"><path d="M1 1H31V29H1Z" fill="#dbe4f1" stroke="#5f7fa8" stroke-width="1.500" /><path d="M3.500 3.500H14V13H3.500ZM18 3.500H28.500V13H18ZM3.500 17H14V26.500H3.500ZM18 17H28.500V26.500H18Z" fill="#94b4e0" stroke="#34507a" stroke-width="1.200" /></svg>{@render caret()}
    </div>

    <svg class="cube" width="160" height="170" viewBox="2700 345 160 170">
      <path d="M2714 482L2806 490Q2832 478 2806 462Z" fill="#888" opacity=".65" filter="blur(5px)" />
      <path d="M2731 376V390" stroke="#8a8af5" stroke-width="5" /><text x="2731" y="373" fill="#9a9af0">Z</text>
      <path d="M2713 391L2730 389L2809 390V420L2806 487L2714 485Z" fill="#e6e6e6" stroke="#c8c8c8" stroke-width="2" stroke-dasharray="14 3" /><path d="M2788 390H2809L2806 487L2795 486Z" fill="#dadada" /><rect x="2730" y="411" width="58" height="58" fill="#dbdee2" />
      <text x="2759.500" y="449" class="rt">RIGHT</text><path d="M2807 467H2822" stroke="#9cf09c" stroke-width="3" /><text x="2832" y="474" fill="#93ed93">Y</text><text x="2704" y="501" fill="#f39292">X</text><path d="M2705 492L2716 485" stroke="#f39292" stroke-width="4" />
    </svg>

    <aside class="palette">
      <div class="phead"><i class="grip"></i><i class="minus"></i><span>SKETCH PALETTE</span><svg width="20" height="12" viewBox="0 0 20 12"><path d="M20 6L10 0V12ZM10 6L0 0V12Z" fill="#333" /></svg></div>
      <div class="pbody">
        <div class="prow head"><svg width="18" height="12" viewBox="0 0 18 12"><path d="M0 0H18L9 12Z" fill="#333" /></svg><b>Options</b></div>
        <div class="prow"><span>Linetype</span>
          <svg class="first" width="32" height="32" viewBox="0 0 32 32" fill="none"><path d="M30 1L4 16L30 31" stroke="#888" stroke-width="1.300" /><path d="M0 16H32M20 1Q30 16 20 31" stroke="#ee8a42" stroke-width="1" stroke-dasharray="5 4" /></svg>
          <svg class="second" width="32" height="32" viewBox="0 0 32 32" fill="none" stroke="#bbb" stroke-width="1.500"><path d="M2 12V4L5 1H22V5H30V12M2 20V28L5 31H22V27H30V20" /><path d="M0 16H32" stroke="#f2c6a8" stroke-width="1" stroke-dasharray="12 3 6 3" /></svg>
        </div>
        <div class="prow"><span>Look At</span>{@render lookAt()}</div>
        {#each options as o}
          <div class="prow"><span>{o[0]}</span><i class="check" class:checked={o[1]}>{#if o[1]}<svg width="18" height="18" viewBox="0 0 18 18"><path d="M1 9L6 15L17 2" fill="none" stroke="#111" stroke-width="3" /></svg>{/if}</i></div>
        {/each}
      </div>
      <div class="pfoot"><button>Finish Sketch</button></div>
    </aside>
  </main>

  <div class="desktop">
    <section class="timeline">
      <div class="play">
        <svg width="24" height="28" viewBox="0 0 24 28" fill="#4f4f4f"><path d="M0 0H3V28H0ZM24 1V27L5 14Z" /></svg>
        <svg width="26" height="28" viewBox="0 0 26 28" fill="#4f4f4f"><path d="M19 1V27L0 14ZM22 8H25V20H22Z" /></svg>
        <svg width="24" height="30" viewBox="0 0 24 30" fill="#4f4f4f"><path d="M0 0L24 15L0 30Z" /></svg>
        <svg width="26" height="28" viewBox="0 0 26 28" fill="#4f4f4f"><path d="M7 1V27L26 14ZM1 8H4V20H1Z" /></svg>
        <svg width="24" height="28" viewBox="0 0 24 28" fill="#4f4f4f"><path d="M21 0H24V28H21ZM0 1V27L19 14Z" /></svg>
      </div>
      <div class="track">
        {#each features as f, i}<div class="feat" class:hot={i === 0}><span>{@render feature(f)}</span><i></i></div>{/each}
      </div>
      <svg class="marker" width="22" height="66" viewBox="0 0 22 66"><path d="M0 2Q0 0 2 0H20Q22 0 22 2V8L14 18H8L0 8Z" fill="#666" /><path d="M11.500 14V64" stroke="#555" stroke-width="3.500" /></svg>
      <svg class="gear" width="34" height="34" viewBox="0 0 34 34"><circle cx="17" cy="17" r="9" fill="none" stroke="#999" stroke-width="6.500" /><circle cx="17" cy="17" r="14" fill="none" stroke="#999" stroke-width="5" stroke-dasharray="6 5" /></svg>
      <i class="hbar"></i>
    </section>
    <div class="dock">
      {#each apps as a}
        {#if a === '|'}<i class="div"></i>
        {:else}<div class="slot">{@render app(a)}{#if running.includes(a)}<i class="dot"></i>{/if}</div>{/if}
      {/each}
    </div>
  </div>
</div>

<style>
  :global(body) { margin: 0; overflow: hidden; }
  * { box-sizing: border-box; }
  svg { display: block; flex: none; overflow: visible; }
  svg.clip { overflow: hidden; }
  i { font-style: normal; }
  .defs { position: absolute; }
  .screen { width: 2880px; height: 1800px; display: flex; flex-direction: column; font: 22px "Noto Sans", "Open Sans", sans-serif; color: #333; background: #5f4f48; overflow: hidden; white-space: nowrap; }
  .menubar { height: 46px; flex: none; display: flex; align-items: center; background: #5f4f48; border-bottom: 2px solid #887872; padding-left: 41px; color: #fff; font: 500 26px Inter, sans-serif; letter-spacing: -.1px; }
  .menubar b { font-weight: 700; margin: 0 39px 0 42px; width: 154px; letter-spacing: -.1px; }
  .apple { margin-top: -6px; }
  .menu { margin-right: 38.800px; }
  .status { margin-left: auto; display: flex; align-items: center; padding-right: 46px; }
  .status > * { margin-right: 18px; }
  .status svg:nth-child(1) { margin-right: 23px; }
  .status svg:nth-child(2) { margin-right: 29px; }
  .status svg:nth-child(3) { margin-right: 28px; }
  .status svg:nth-child(4) { margin-right: 22px; }
  .pct { font-size: 23px; width: 46px; margin-right: 9px; letter-spacing: -1px; }
  .status svg:nth-child(6) { margin-right: 25px; }
  .status svg:nth-child(7) { margin-right: 41px; }
  .clock { width: 172px; margin-right: 46px; letter-spacing: .6px; }
  .status svg:nth-child(9) { margin-right: 36px; }
  .siri { width: 32px; height: 32px; border-radius: 50%; border: 2px solid #eee; background: conic-gradient(#ff8ac0, #c65bd8, #4f5fe0, #3aa7d8, #5be0d8, #6f8ff5, #e58ad8, #ff8ac0); margin-right: 26px; display: flex; align-items: center; justify-content: center; }
  .status svg:last-child { margin-right: 0; margin-left: -2px; width: 37px; }
  .titlebar { height: 44px; flex: none; display: flex; align-items: center; background: linear-gradient(#e8e8e8, #cdcdcd); border-bottom: 2px solid #adadad; border-radius: 10px 10px 0 0; padding-left: 16px; font: 400 25.500px Inter, sans-serif; color: #4a4a4a; }
  .titlebar i { width: 24px; height: 24px; border-radius: 50%; margin-right: 16px; flex: none; }
  .titlebar .red { background: #ee6a5f; border: 1px solid #d35148; }
  .titlebar .amber { background: #f5be4f; border: 1px solid #d8a03a; }
  .titlebar .green { background: #61c454; border: 1px solid #4da73f; }
  .titlebar span { width: 2608px; text-align: center; letter-spacing: .08px; padding-top: 1px; }
  .docbar { height: 64px; flex: none; display: flex; background: #ccc; }
  .quick { width: 386px; display: flex; align-items: center; padding: 0 0 0 18px; }
  .file { margin: 0 12px 0 39px; }
  .quick .caret { width: 14px; margin-top: -3px; }
  .save { margin: 0 39px 0 37px; }
  .undo { margin-right: 12px; }
  .redo { margin: 0 12px 0 25px; }
  .doctab { width: 2060px; margin-top: 8px; border-radius: 10px 10px 0 0; background: #f1f1f1; display: flex; align-items: center; padding: 3px 13px 0 898px; font-size: 23.500px; color: #333; }
  .doctab span { margin: -3px 0 0 9px; letter-spacing: .5px; }
  .doctab .close { margin-left: auto; margin-top: -2px; }
  .plus { margin: 8px 0 0 8px; width: 56px; border-radius: 8px 8px 0 0; background: #bbb; display: flex; align-items: center; justify-content: center; padding-left: 3px; }
  .right { display: flex; align-items: center; gap: 34px; padding-left: 24px; }
  .avatar { width: 50px; height: 50px; border-radius: 50%; background: #efefef; display: flex; align-items: center; justify-content: center; margin-left: 7px; font-size: 24px; padding-bottom: 1px; }
  .ribbon { height: 164px; flex: none; display: flex; background: #f1f1f1; border-bottom: 2px solid #c8c8c8; }
  .design { margin: 21px 21px 0 23px; width: 220px; height: 122px; border: 2px solid #ccc; border-radius: 8px; display: flex; align-items: center; justify-content: center; gap: 9px; font-weight: 600; padding: 0 0 2px 2px; }
  .ribmain { display: flex; flex-direction: column; }
  .tabs { height: 48px; display: flex; align-items: flex-start; padding-left: 36px; }
  .tab { height: 47px; line-height: 43px; letter-spacing: .15px; }
  .tab.on { width: 138px; text-align: center; background: #cdeaf7; color: #0696d7; font-weight: 600; border-bottom: 6px solid #0696d7; letter-spacing: .6px; }
  .groups { height: 114px; display: flex; align-items: stretch; margin-top: -4px; padding-top: 4px; box-sizing: content-box; }
  .group { display: flex; flex-direction: column; align-items: center; }
  .icons { height: 76px; display: flex; align-items: center; justify-content: center; }
  .tool { margin: 0 11px; }
  .gl { display: flex; align-items: center; gap: 5px; line-height: 30px; margin-top: 1px; padding-top: 2px; }
  .gl .caret { margin-top: -2px; }
  .create { width: 523px; padding-right: 10px; }
  .create .gl { margin-left: -9px; }
  .modify { width: 278px; padding-left: 3px; }
  .modify .gl { margin-left: -13px; }
  .cons { width: 1052px; padding-left: 3px; }
  .cons .gl { margin-left: -16px; }
  .inspect { width: 156px; padding-left: 3px; }
  .insert { width: 146px; }
  .select { width: 156px; padding-right: 4px; }
  .finish { width: 216px; background: #cdeaf7; margin-top: -4px; padding-top: 4px; height: 118px; }
  .sep { width: 2px; background: #ccc; margin: 5px 0 7px; }
  .viewport { height: 1282px; flex: none; position: relative; background: #fff; overflow: hidden; }
  .canvas { position: absolute; left: 0; top: 0; }
  .nums { font: 33.500px "Open Sans", sans-serif; letter-spacing: -3.500px; }
  .bhead { position: absolute; left: 8px; top: 8px; width: 599px; height: 50px; background: #f1f1f1; border: 1px solid #ccc; border-width: 1px 3px 3px 1px; display: flex; align-items: center; padding-left: 9px; color: #666; font-size: 22.500px; }
  .bhead span { margin-left: 20px; letter-spacing: -.5px; }
  .bhead.comments { top: 1223px; height: 49px; border-top-color: #e5e5e5; }
  .bhead.comments span { margin-left: 40px; }
  .bhead b { margin-left: auto; width: 28px; height: 26px; border: 1px solid #999; background: #e2e2e2; display: flex; align-items: center; justify-content: center; margin-right: 9px; }
  .minus { width: 17px; height: 17px; border-radius: 6px; background: linear-gradient(#ccc, #ccc) center / 11px 2px no-repeat #333; flex: none; }
  .bhead > .minus { margin-left: auto; margin-right: 13px; }
  .minus.cross { background: linear-gradient(#ccc, #ccc) center / 11px 2px no-repeat, linear-gradient(#ccc, #ccc) center / 2px 11px no-repeat, #333; }
  .grip { width: 7px; height: 20px; border-left: 2px solid #888; border-right: 2px solid #888; }
  .grip.blue { background: #a5d5f8; box-shadow: -3px 0 #3fa9f5; width: 7px; margin-right: 1px; }
  .scroll { position: absolute; left: 16px; top: 68px; width: 12px; height: 1108px; background: #c9cacc; padding-top: 886px; }
  .scroll i { display: block; height: 150px; border-radius: 6px; background: #9d9d9f; border: 1px dashed #777; }
  .tree { position: absolute; left: 76px; top: 64px; display: flex; flex-direction: column; }
  .line { height: 48px; display: flex; align-items: center; }
  .tw { width: 76px; display: flex; justify-content: flex-end; padding-right: 22px; }
  .up .tw { width: 40px; padding-right: 21px; }
  .row { height: 40px; display: flex; align-items: center; background: #f1f1f1; }
  .e { width: 44px; padding-left: 6px; }
  .n { width: 56px; display: flex; justify-content: center; }
  .name { margin-left: 16px; font-size: 22px; letter-spacing: .25px; padding-bottom: 2px; }
  .navbar { position: absolute; left: 1204px; top: 1222px; width: 474px; height: 48px; background: #f1f1f1; display: flex; align-items: center; padding-left: 7px; }
  .n1 { margin-right: 11px; }
  .n2 { margin: 0 21px 0 13px; }
  .n3 { margin-right: 20px; }
  .n4 { margin-right: 17px; }
  .n5 { margin-right: 11px; }
  .n6 { margin: 0 5px 0 11px; }
  .n7 { margin: 0 5px 0 13px; }
  .n8 { margin: 0 5px 0 13px; }
  .cube { position: absolute; left: 2700px; top: 27px; }
  .cube text { font: 700 24px "Open Sans", sans-serif; text-anchor: middle; }
  .cube .rt { font-size: 20px; fill: #888d93; }
  .palette { position: absolute; left: 2372px; top: 224px; width: 500px; }
  .phead { height: 48px; border: 1px solid #ccc; border-right-width: 2px; background: #f1f1f1; display: flex; align-items: center; color: #666; padding: 0 8px 0 3px; font-size: 22px; letter-spacing: .7px; }
  .phead .minus { margin: 0 8px 0 14px; width: 18px; height: 18px; border-radius: 7px; }
  .phead svg { margin-left: auto; }
  .phead .grip { width: 6px; border-width: 0 2px 0 1px; }
  .pbody { height: 725px; background: #f1f1f1; border: solid #ccc; border-width: 1px 2px 1px 2px; }
  .prow { height: 59.950px; display: flex; align-items: center; padding-left: 24px; font-size: 22px; letter-spacing: .25px; }
  .prow span { width: 326px; padding-bottom: 1px; }
  .prow.head { padding-left: 8px; gap: 8px; }
  .prow b { font-weight: 700; }
  .first { margin-left: -2px; }
  .second { margin-left: 24px; }
  .check { width: 26px; height: 26px; margin-left: 1px; border: 2px solid #444; border-radius: 5px; background: linear-gradient(#f5f5f5, #c4c4c4); display: flex; align-items: center; justify-content: center; }
  .check.checked { background: linear-gradient(#aaa, #e0e0e0); }
  .pfoot { height: 71px; background: #f1f1f1; border: 1px solid #ccc; border-width: 0 2px 2px 1px; padding: 16px 10px 0; display: flex; justify-content: flex-end; }
  .pfoot button { width: 168px; height: 39px; border: 2px solid #bbb; background: #e9e9e9; color: #555; font: 23px "Noto Sans", sans-serif; padding: 0; letter-spacing: .75px; }
  .desktop { height: 200px; flex: none; background: linear-gradient(90deg, #43444c, #38363f 30%, #4b4648 55%, #30303c 90%, #434555); }
  .timeline { position: relative; height: 100px; border-top: 4px solid #ccc; background: linear-gradient(#f3f3f3, #e4e4e4); border-radius: 0 0 12px 12px; display: flex; }
  .play { width: 285px; display: flex; align-items: center; gap: 25px; padding: 12px 0 0 22px; }
  .track { width: 2496px; display: flex; padding-top: 22px; height: 82px; background: repeating-linear-gradient(90deg, #ccc 0 8px, transparent 8px 10px) -11px 78px / 20px 4px no-repeat, linear-gradient(#c3c3c3, #c3c3c3) 11px 78px / 2460px 4px no-repeat; }
  .feat { width: 47.970px; flex: none; display: flex; flex-direction: column; align-items: center; position: relative; height: 60px; }
  .feat span { height: 48px; width: 48px; display: flex; align-items: center; justify-content: center; border-radius: 5px; padding-right: 2px; }
  .feat.hot span { background: #e0e326; }
  .feat i { width: 4px; height: 11px; background: #c6c6c6; }
  .marker { position: absolute; left: 2768px; top: 18px; }
  .gear { position: absolute; left: 2821px; top: 37px; }
  .hbar { position: absolute; left: 2516px; top: 0; width: 352px; height: 14px; border-radius: 0 0 7px 7px; background: #ccc; }
  .dock { height: 98px; margin: 2px 62px 0; background: linear-gradient(90deg, #4a4954, #595861 38%, #776b70 50%, #655d66 60%, #55535f 80%, #4c4b55); border: 1px solid #28272e; border-top: 2px solid #73727a; border-radius: 8px 8px 0 0; display: flex; padding: 4px 0 0 5px; box-shadow: 0 -2px #25232b; }
  .slot { width: 80.950px; flex: none; display: flex; flex-direction: column; align-items: center; }
  .dot { width: 8px; height: 8px; border-radius: 50%; background: #d9d7dd; }
  .div { width: 36px; flex: none; height: 70px; margin-top: 8px; background: linear-gradient(#98969c, #98969c) center / 2px 100% no-repeat; }
  .app text { font-family: "Open Sans", sans-serif; }
  .app .c { text-anchor: middle; }
  .app .w { fill: #fff; }
  .app .b { font-weight: 600; }
  .app .s { font-family: "Liberation Serif", serif; }
</style>
